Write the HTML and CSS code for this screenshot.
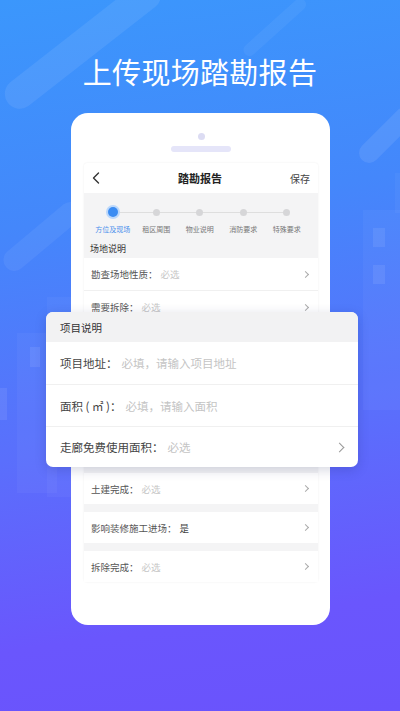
FILE: index.html
```html
<!DOCTYPE html>
<html lang="zh-CN">
<head>
<meta charset="utf-8">
<title>上传现场踏勘报告</title>
<link rel="stylesheet" href="styles.css">
</head>
<body>
<div class="page">
  <div class="deco bar bar-a"></div>
  <div class="deco bar bar-b"></div>
  <div class="deco bar bar-c"></div>
  <div class="deco bar bar-d"></div>
  <div class="deco bldg bldg-l1"></div>
  <div class="deco bldg bldg-l2"></div>
  <div class="deco win win-l1"></div>
  <div class="deco win win-l2"></div>
  <div class="deco bldg bldg-r1"></div>
  <div class="deco bldg bldg-r2"></div>
  <div class="deco win win-r1"></div>
  <div class="deco win win-r2"></div>

  <h1 class="title">上传现场踏勘报告</h1>

  <div class="phone">
    <div class="speaker"></div>
    <div class="earpiece"></div>
    <div class="screen">
      <div class="nav">
        <svg class="back" viewBox="0 0 8 12" width="8" height="12"><path d="M6.5 1 L1.5 6 L6.5 11" fill="none" stroke="#333" stroke-width="1.4" stroke-linecap="round" stroke-linejoin="round"/></svg>
        <span class="nav-title">踏勘报告</span>
        <span class="nav-save">保存</span>
      </div>
      <div class="steps-area">
        <div class="steps">
          <div class="step active"><span class="dot"></span><span class="step-label">方位及现场</span></div>
          <div class="step"><span class="dot"></span><span class="step-label">租区周围</span></div>
          <div class="step"><span class="dot"></span><span class="step-label">物业说明</span></div>
          <div class="step"><span class="dot"></span><span class="step-label">消防要求</span></div>
          <div class="step last"><span class="dot"></span><span class="step-label">特殊要求</span></div>
        </div>
        <div class="section-title">场地说明</div>
      </div>
      <div class="row bordered"><span class="lbl">勘查场地性质：</span><span class="ph">必选</span><span class="chev"></span></div>
      <div class="row"><span class="lbl">需要拆除：</span><span class="ph">必选</span><span class="chev"></span></div>
      <div class="filler"></div>
      <div class="gap first-gap"></div>
      <div class="row"><span class="lbl">土建完成：</span><span class="ph">必选</span><span class="chev"></span></div>
      <div class="gap"></div>
      <div class="row"><span class="lbl">影响装修施工进场：</span><span class="val">是</span><span class="chev"></span></div>
      <div class="gap"></div>
      <div class="row"><span class="lbl">拆除完成：</span><span class="ph">必选</span><span class="chev"></span></div>
    </div>
  </div>

  <div class="popup">
    <div class="popup-head">项目说明</div>
    <div class="prow r1"><span class="plbl">项目地址：</span><span class="pph">必填，请输入项目地址</span></div>
    <div class="prow r2"><span class="plbl">面积 ( ㎡ )：</span><span class="pph">必填，请输入面积</span></div>
    <div class="prow r3"><span class="plbl">走廊免费使用面积：</span><span class="pph">必选</span><span class="pchev"></span></div>
  </div>
</div>
</body>
</html>
```
FILE: styles.css
```css
* { box-sizing: border-box; margin: 0; padding: 0; }
html, body { width: 400px; height: 711px; overflow: hidden; }
body {
  font-family: "Noto Sans CJK SC", "Noto Sans", sans-serif;
  background: #5a70fb;
}
.page {
  position: relative;
  width: 400px;
  height: 711px;
  overflow: hidden;
  background: linear-gradient(172deg, #3b97fc 0%, #4487fb 30%, #5a6ffc 60%, #6a56fd 85%, #6a53fc 100%);
}
.deco { position: absolute; }
.bar {
  background: rgba(255, 255, 255, 0.08);
  border-radius: 20px;
  transform-origin: left center;
}
.bar-a { left: 8px; top: 88px; width: 190px; height: 30px; transform: rotate(-38deg); border-radius: 15px; }
.bar-b { left: 245px; top: 48px; width: 80px; height: 12px; transform: rotate(-42deg); background: rgba(255,255,255,0.05); }
.bar-c { left: 362px; top: 150px; width: 70px; height: 20px; transform: rotate(-45deg); background: rgba(255,255,255,0.09); }
.bar-d { left: 6px; top: 256px; width: 95px; height: 22px; transform: rotate(-40deg); background: rgba(255,255,255,0.06); }
.bldg { background: rgba(255, 255, 255, 0.035); }
.bldg-l1 { left: 47px; top: 297px; width: 30px; height: 200px; }
.bldg-l2 { left: 17px; top: 333px; width: 40px; height: 160px; }
.win { background: rgba(255, 255, 255, 0.08); }
.win-l1 { left: 30px; top: 347px; width: 10px; height: 20px; }
.win-l2 { left: 0; top: 388px; width: 7px; height: 32px; }
.bldg-r1 { left: 363px; top: 210px; width: 40px; height: 200px; }
.bldg-r2 { left: 395px; top: 173px; width: 6px; height: 40px; }
.win-r1 { left: 373px; top: 228px; width: 12px; height: 19px; }
.win-r2 { left: 373px; top: 265px; width: 12px; height: 19px; }

.title {
  position: relative;
  padding-top: 55px;
  text-align: center;
  color: #fff;
  font-size: 29px;
  line-height: 32px;
  font-weight: 400;
  letter-spacing: 0.3px;
}

.phone {
  position: relative;
  margin: 26px 0 0 71px;
  width: 259px;
  height: 512px;
  background: #fff;
  border-radius: 17px;
  padding: 20px 12px 0 13px;
  display: flex;
  flex-direction: column;
  align-items: center;
}
.speaker {
  width: 7px; height: 7px; border-radius: 50%;
  background: #dcdcf3;
}
.earpiece {
  margin-top: 6px;
  width: 60px; height: 6px; border-radius: 3px;
  background: #e5e5f9;
}
.screen {
  margin-top: 11px;
  width: 234px;
  display: flex;
  flex-direction: column;
  box-shadow: 0 0 2px rgba(0, 0, 0, 0.08);
  border-radius: 3px;
  background: #fff;
}
.nav {
  height: 30px;
  display: flex;
  align-items: center;
  padding: 0 8px 0 8px;
  position: relative;
}
.back { display: block; }
.nav-title {
  flex: 1;
  text-align: center;
  font-size: 11px;
  font-weight: 700;
  color: #222;
  margin-left: 10px;
}
.nav-save { font-size: 10px; color: #444; }
.steps-area {
  height: 65px;
  background: #f4f4f5;
  padding-top: 14px;
}
.steps {
  display: grid;
  grid-template-columns: repeat(5, 43.5px);
  padding-left: 7px;
}
.step {
  position: relative;
  display: flex;
  flex-direction: column;
  align-items: center;
}
.step::after {
  content: "";
  position: absolute;
  left: 50%;
  top: 5px;
  width: 43.5px;
  height: 1px;
  background: #dedede;
}
.step.last::after { display: none; }
.dot {
  position: relative;
  z-index: 1;
  width: 7px; height: 7px; margin: 1.5px 0;
  border-radius: 50%;
  background: #d6d6d8;
}
.step.active .dot {
  width: 10px; height: 10px; margin: 0;
  background: #3b8cf2;
  box-shadow: 0 0 0 2px #bcd8fb;
}
.step-label {
  margin-top: 7px;
  font-size: 7px;
  line-height: 10px;
  color: #777;
  white-space: nowrap;
}
.step.active .step-label { color: #4a8fec; }
.section-title {
  margin-top: 9px;
  padding-left: 6px;
  font-size: 9px;
  line-height: 12px;
  color: #333;
}
.row {
  height: 31px;
  display: flex;
  align-items: center;
  padding: 0 10px 0 7px;
  font-size: 9.5px;
  background: #fff;
}
.row.bordered { height: 33px; border-bottom: 1px solid #f0f0f0; }
.row.bordered + .row { height: 32px; }
.lbl { color: #555; }
.ph { color: #c6c6c6; margin-left: 3px; flex: 1; }
.val { color: #444; margin-left: 3px; flex: 1; }
.chev {
  width: 5px; height: 5px;
  border-top: 1px solid #aaa;
  border-right: 1px solid #aaa;
  transform: rotate(45deg);
}
.filler { height: 144px; }
.gap { height: 8px; background: #f4f4f5; }
.gap.first-gap { height: 6px; }

.popup {
  position: absolute;
  left: 46px;
  top: 312px;
  width: 312px;
  height: 155px;
  background: #fff;
  border-radius: 7px;
  overflow: hidden;
  box-shadow: 0 3px 12px rgba(20, 30, 90, 0.18);
  display: flex;
  flex-direction: column;
}
.popup-head {
  height: 30px;
  background: #f2f2f3;
  display: flex;
  align-items: center;
  padding-left: 14px;
  font-size: 10.5px;
  color: #333;
}
.prow {
  display: flex;
  align-items: center;
  padding: 0 12px 0 14px;
  font-size: 11.5px;
  border-bottom: 1px solid #f0f0f0;
}
.prow.r1 { height: 43px; }
.prow.r2 { height: 42px; }
.prow.r3 { height: 40px; border-bottom: none; }
.plbl { color: #454545; }
.pph { color: #c4c4c4; margin-left: 4px; flex: 1; }
.pchev {
  width: 7px; height: 7px;
  border-top: 1px solid #999;
  border-right: 1px solid #999;
  transform: rotate(45deg);
  margin-right: 3px;
}
```
